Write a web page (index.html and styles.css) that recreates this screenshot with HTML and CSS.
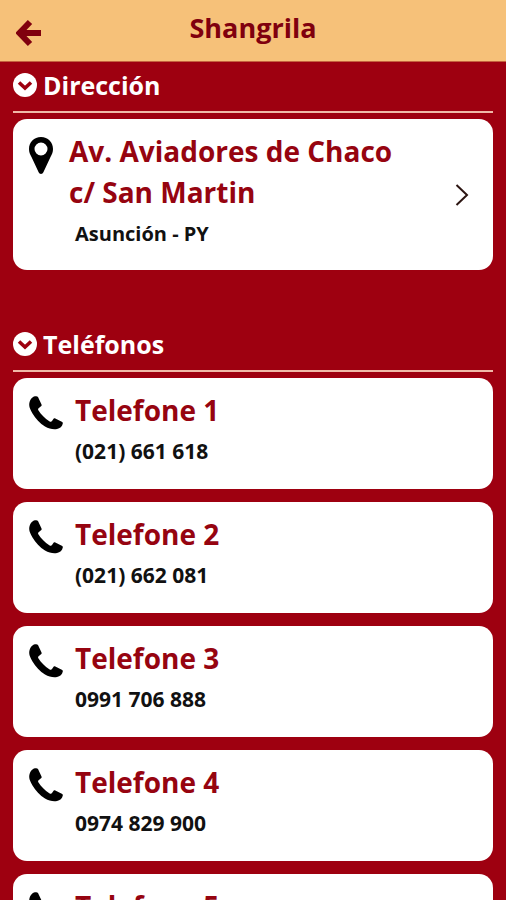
FILE: index.html
```
<!DOCTYPE html>
<html lang="es">
<head>
<meta charset="UTF-8" />
<meta name="viewport" content="width=device-width, initial-scale=1" />
<title>Shangrila</title>
<link rel="stylesheet" href="styles.css">
</head>
<body>

<!-- shared icons -->
<svg class="sprite" aria-hidden="true">
  <symbol id="icon-phone" viewBox="0 0 34 34">
    <path d="M6 0.300C3 0.800 0.200 4.500 0.200 9C0.200 11.500 1.800 14.500 3.500 17.500C6.500 22.500 11 27.500 16 30.500C20 32.800 24 33.600 28 33C31 32.500 33.300 30.500 33.800 27.500C33.900 26.600 33.600 26.100 32.800 25.700L26.300 22.500C25.300 22 24.700 22.400 24.200 23.200L23 25C22.300 26 21.500 25.900 20.300 25.200C16 22.600 12 18.500 9.500 14.500C8.800 13.300 9 12.700 9.900 12L12 10.300C12.700 9.700 12.800 9.100 12.400 8.200L9 1C8.400 0.100 7.300 0 6 0.300Z"/>
  </symbol>
  <symbol id="icon-down" viewBox="0 0 24 24">
    <circle cx="12" cy="12" r="12" fill="#fff"/>
    <path d="M6 9.500L12 15L18 9.500" fill="none" stroke="#9e0010" stroke-width="3.600"/>
  </symbol>
</svg>

<header class="topbar">
  <button class="back" aria-label="Volver">
    <svg width="26" height="28" viewBox="0 0 26 28">
      <path d="M14 3L3.500 14L14 25M4 14H25" fill="none" stroke="#80000e" stroke-width="6"/>
    </svg>
  </button>
  <h1>Shangrila</h1>
</header>

<main class="content">
  <section class="group">
    <h2><svg class="down"><use href="#icon-down"/></svg>Dirección</h2>
    <a class="card address" href="#mapa">
      <svg class="pin" viewBox="0 0 24 37">
        <path fill-rule="evenodd" d="M12 0C5 0 0 5 0 12C0 15 1 17.500 2.500 20L9.500 35C10.500 37.500 13.500 37.500 14.500 35L21.500 20C23 17.500 24 15 24 12C24 5 19 0 12 0ZM12 5.500A6.500 6.500 0 1 1 12 18.500A6.500 6.500 0 1 1 12 5.500Z"/>
      </svg>
      <div class="info">
        <h3>Av. Aviadores de Chaco<br>c/ San Martin</h3>
        <p>Asunción - PY</p>
      </div>
      <svg class="next" viewBox="0 0 14 22">
        <path d="M1.500 1L12 11L1.500 21" fill="none" stroke="#2c1512" stroke-width="2"/>
      </svg>
    </a>
  </section>

  <section class="group">
    <h2><svg class="down"><use href="#icon-down"/></svg>Teléfonos</h2>
    <a class="card" href="tel:021661618">
      <svg class="phone"><use href="#icon-phone"/></svg>
      <div class="info">
        <h3>Telefone 1</h3>
        <p>(021) 661 618</p>
      </div>
    </a>
    <a class="card" href="tel:021662081">
      <svg class="phone"><use href="#icon-phone"/></svg>
      <div class="info">
        <h3>Telefone 2</h3>
        <p>(021) 662 081</p>
      </div>
    </a>
    <a class="card" href="tel:0991706888">
      <svg class="phone"><use href="#icon-phone"/></svg>
      <div class="info">
        <h3>Telefone 3</h3>
        <p>0991 706 888</p>
      </div>
    </a>
    <a class="card" href="tel:0974829900">
      <svg class="phone"><use href="#icon-phone"/></svg>
      <div class="info">
        <h3>Telefone 4</h3>
        <p>0974 829 900</p>
      </div>
    </a>
    <a class="card" href="#telefone5">
      <svg class="phone"><use href="#icon-phone"/></svg>
      <div class="info">
        <h3>Telefone 5</h3>
      </div>
    </a>
  </section>
</main>

</body>
</html>
```
FILE: styles.css
```
* {
  box-sizing: border-box;
}
body {
  margin: 0;
  height: 100vh;
  display: flex;
  flex-direction: column;
  background-color: #9e0010;
  font-family: "Open Sans", "Noto Sans", sans-serif;
}
h1, h2, h3, p {
  margin: 0;
  font-weight: 700;
}
.sprite {
  position: absolute;
  width: 0;
  height: 0;
}
.topbar {
  flex: none;
  display: grid;
  grid-template-columns: 58px 1fr 58px;
  align-items: center;
  background-color: #f6c179;
  border-bottom: 1px solid #c4623f;
  height: 62px;
  padding-bottom: 6px;
}
.topbar h1 {
  color: #80000e;
  font-size: 27px;
  line-height: 32px;
  text-align: center;
}
.back {
  border: none;
  background: none;
  padding: 10px 0 0 16px;
  text-align: left;
  cursor: pointer;
}
.back svg {
  display: block;
}
.content {
  flex: 1;
  overflow-y: auto;
  scrollbar-width: none;
  padding: 0 13px;
}
.group {
  margin-bottom: 51px;
}
.group h2 {
  display: flex;
  align-items: center;
  gap: 6px;
  height: 51px;
  margin-bottom: 6px;
  padding-bottom: 3px;
  border-bottom: 2px solid #f0b9a8;
  color: #fff;
  font-size: 25px;
}
.down {
  width: 24px;
  height: 24px;
}
.card {
  display: flex;
  align-items: flex-start;
  min-height: 111px;
  padding: 12px 24px 12px 16px;
  border-radius: 14px;
  background-color: #fff;
  color: #111;
  text-decoration: none;
}
.card + .card {
  margin-top: 13px;
}
.phone {
  flex: none;
  width: 34px;
  height: 34px;
  margin-top: 6px;
}
.info {
  flex: 1;
  padding-left: 12px;
}
.info h3 {
  color: #960410;
  font-size: 28px;
  line-height: 41px;
}
.info p {
  font-size: 21px;
  line-height: 41px;
}
.address {
  min-height: 151px;
}
.pin {
  flex: none;
  width: 24px;
  height: 37px;
  margin-top: 6px;
}
.address .info {
  padding-left: 16px;
}
.address p {
  padding-left: 6px;
  font-size: 20px;
}
.next {
  flex: none;
  align-self: center;
  width: 14px;
  height: 22px;
}
```
